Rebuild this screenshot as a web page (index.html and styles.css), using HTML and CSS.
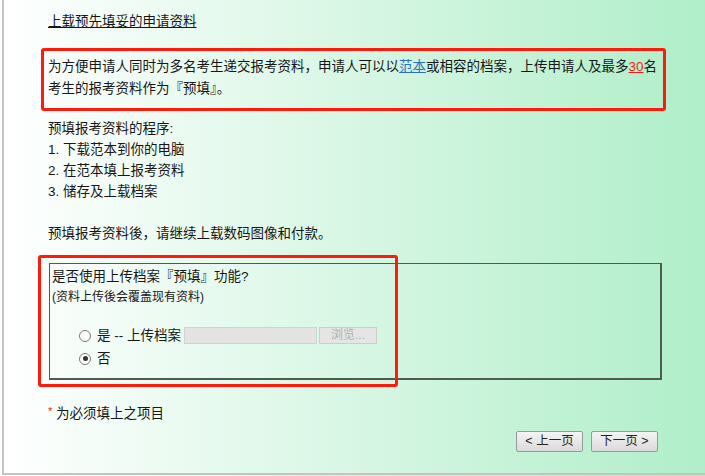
FILE: index.html
```html
<!DOCTYPE html>
<html>
<head>
<meta charset="utf-8">
<link rel="stylesheet" href="styles.css">
</head>
<body>
<div class="page">
  <div class="content">
    <p class="title">上载预先填妥的申请资料</p>
    <p class="intro">为方便申请人同时为多名考生递交报考资料，申请人可以以<a class="link">范本</a>或相容的档案，上传申请人及最多<span class="num">30</span>名考生的报考资料作为『预填』。</p>
    <p class="steps">预填报考资料的程序:<br>1. 下载范本到你的电脑<br>2. 在范本填上报考资料<br>3. 储存及上载档案<br><br>预填报考资料後，请继续上载数码图像和付款。</p>
    <div class="fieldset">
      <div class="question">是否使用上传档案『预填』功能?</div>
      <div class="note">(资料上传後会覆盖现有资料)</div>
      <div class="options">
        <div class="opt"><span class="radio"></span><span class="opt-label">是 -- 上传档案</span><span class="file"></span><span class="browse">浏览...</span></div>
        <div class="opt"><span class="radio checked"></span><span class="opt-label">否</span></div>
      </div>
    </div>
    <p class="req"><span class="star">*</span> 为必须填上之项目</p>
    <div class="nav">
      <button class="btn">&lt; 上一页</button>
      <button class="btn">下一页 &gt;</button>
    </div>
  </div>
  <div class="mark mark-intro"></div>
  <div class="mark mark-field"></div>
</div>
</body>
</html>
```

FILE: styles.css
```css
html, body {
  margin: 0;
  padding: 0;
}
body {
  width: 705px;
  height: 476px;
  overflow: hidden;
  background: linear-gradient(to right, #ffffff 0%, #b0eec9 100%);
  font-family: "Liberation Sans", "Noto Sans CJK SC", sans-serif;
  font-size: 13.5px;
  color: #161616;
}
.page {
  position: relative;
  box-sizing: border-box;
  margin-left: 2px;
  height: 475px;
  border-left: 2px solid #c3c3c3;
  border-bottom: 2px solid #c3c3c3;
}
.content {
  padding: 12px 0 0 44px;
  width: 615px;
}
.title {
  margin: 0;
  line-height: 20px;
  text-decoration: underline;
}
.intro {
  margin: 24px 0 0 0;
  line-height: 22px;
  width: 616px;
}
.link {
  color: #2a6fc4;
  text-decoration: underline;
}
.num {
  color: #ff1a1a;
  text-decoration: underline;
}
.steps {
  margin: 18px 0 0 0;
  line-height: 21px;
}
.fieldset {
  box-sizing: border-box;
  margin: 19px 0 0 1px;
  width: 613px;
  height: 117px;
  border: 1px solid #4f5a52;
  border-right-width: 2px;
  border-bottom-width: 2px;
  padding: 3px 0 0 2px;
}
.question {
  line-height: 20px;
}
.note {
  font-size: 12px;
  line-height: 20px;
}
.options {
  margin-top: 17px;
  padding-left: 27px;
}
.opt {
  display: flex;
  align-items: center;
  height: 23px;
}
.radio {
  box-sizing: border-box;
  width: 12px;
  height: 12px;
  border: 1px solid #7a7a7a;
  border-radius: 50%;
  background: #ffffff;
  margin-right: 6px;
  display: flex;
  align-items: center;
  justify-content: center;
}
.radio.checked::after {
  content: "";
  width: 5px;
  height: 5px;
  border-radius: 50%;
  background: #333333;
}
.opt-label {
  line-height: 20px;
}
.file {
  box-sizing: border-box;
  width: 133px;
  height: 17px;
  margin-left: 3px;
  background: #e3e3e3;
  border: 1px solid #d2d2d2;
}
.browse {
  box-sizing: border-box;
  width: 58px;
  height: 17px;
  margin-left: 2px;
  background: #e5e5e5;
  border: 1px solid #cdcdcd;
  color: #b0b0b0;
  font-size: 12px;
  line-height: 15px;
  text-align: center;
}
.req {
  margin: 24px 0 0 0;
  line-height: 20px;
}
.star {
  color: #ff2020;
  font-size: 11px;
  vertical-align: top;
  position: relative;
  top: -3px;
}
.nav {
  display: flex;
  justify-content: flex-end;
  gap: 8px;
  width: 610px;
  margin-top: 7px;
}
.btn {
  box-sizing: border-box;
  width: 67px;
  height: 21px;
  padding: 0;
  font-family: "Liberation Sans", "Noto Sans CJK SC", sans-serif;
  font-size: 12.5px;
  color: #222222;
  background: linear-gradient(#f4f4f4, #dadada);
  border: 1px solid #9a9a9a;
  border-radius: 2px;
  line-height: 19px;
}
.mark {
  position: absolute;
  box-sizing: border-box;
  border: 3px solid #ff1b0c;
  border-radius: 3px;
}
.mark-intro {
  left: 37px;
  top: 48px;
  width: 625px;
  height: 63px;
}
.mark-field {
  left: 34px;
  top: 255px;
  width: 360px;
  height: 132px;
}
```
